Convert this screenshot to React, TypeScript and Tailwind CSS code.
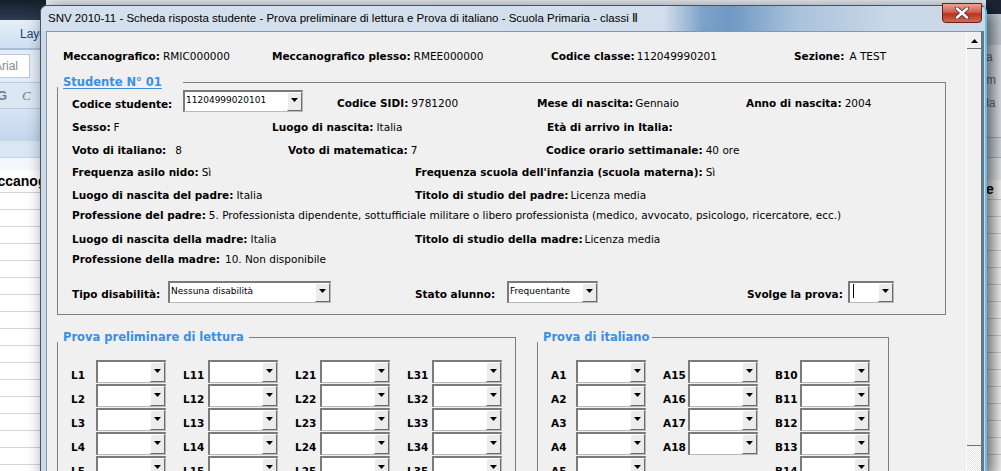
import React from 'react';
import clsx from 'clsx';

const font = "font-['DejaVu_Sans',sans-serif]";

const Arrow = () => (
  <svg width="7" height="4" viewBox="0 0 7 4">
    <path d="M0 0h7L3.5 4z" fill="#000" />
  </svg>
);

// classic win combobox
const Combo: React.FC<{ className?: string; text?: string; cursor?: boolean }> = ({ className, text, cursor }) => (
  <div
    className={clsx(
      'flex bg-white border-t-2 border-l-2 border-t-[#7a7a7a] border-l-[#7a7a7a] border-r border-b border-r-[#b9b9b9] border-b-[#b9b9b9]',
      className
    )}
  >
    <div className={`flex-1 flex items-start pl-[1px] pt-[2px] text-[9px] leading-[12px] text-black ${font} whitespace-nowrap overflow-hidden`}>
      {cursor && <div className="w-px h-[14px] -mt-[1px] bg-black ml-[2px]" />}
      {text}
    </div>
    <div className="w-[15px] flex items-center justify-center pb-[3px] bg-[#ececec] border-t border-l border-t-white border-l-white border-r border-b border-r-[#6b6b6b] border-b-[#6b6b6b]">
      <Arrow />
    </div>
  </div>
);

const GroupHeader: React.FC<{ title: string; underline?: boolean; gap: string }> = ({ title, underline, gap }) => (
  <div className="flex h-[16px]">
    <div className="w-[6px] self-end h-[3px] border-l border-[#7e7e7e]" />
    <span
      className={clsx(
        `text-[11.5px] leading-[16px] font-bold text-[#3b8ee6] whitespace-nowrap ${font}`,
        underline && 'underline underline-offset-2'
      )}
    >
      {title}
    </span>
    <div className={clsx('flex-1 self-end h-[8px] border-t border-r border-[#7e7e7e]', gap)} />
  </div>
);

const KV: React.FC<{ k: string; v?: string; gap?: string; className?: string }> = ({ k, v, gap = 'ml-[3px]', className }) => (
  <div className={clsx('flex items-center whitespace-nowrap', className)}>
    <span className="font-bold">{k}</span>
    {v && <span className={gap}>{v}</span>}
  </div>
);

const Cell: React.FC<{ label?: string }> = ({ label }) =>
  label ? (
    <div className="flex h-[23px]">
      <span className="w-[25px] pt-[8px] leading-[14px] font-bold">{label}</span>
      <Combo className="w-[70px] h-[23px]" />
    </div>
  ) : (
    <div className="h-[23px] w-[95px]" />
  );

const Column: React.FC<{ items: (string | null)[] }> = ({ items }) => (
  <div className="flex flex-col gap-[1px]">
    {items.map((it, i) => (
      <Cell key={i} label={it ?? undefined} />
    ))}
  </div>
);

const range = (p: string, a: number, b: number) => {
  const out: string[] = [];
  for (let i = a; i <= b; i++) out.push(p + i);
  return out;
};

export default function App() {
  const gridRows = Array.from({ length: 17 });

  return (
    <div className="relative w-[1001px] h-[471px] overflow-hidden bg-white flex">
      {/* excel window behind - left strip */}
      <div className="w-[46px] shrink-0 h-full overflow-hidden flex flex-col font-['Liberation_Sans',sans-serif]">
        <div className="h-[20px] shrink-0 bg-[#222d3e] [background-image:linear-gradient(180deg,#161e2a,#2d3c51)]" />
        <div className="h-[28px] shrink-0 bg-[#dae6f4] [background-image:linear-gradient(180deg,#e4eef9,#d0dff1)] flex items-center pl-[20px] text-[12px] text-[#1e3f73] whitespace-nowrap">
          Layout di pagina
        </div>
        <div className="h-[2px] shrink-0 bg-[#a9bfd6]" />
        <div className="h-[32px] shrink-0 bg-[#e3ecf7] flex items-center">
          <div className="h-[24px] w-[38px] bg-white border border-[#b8c9dd] flex items-center -ml-[8px] pl-[1px] text-[12px] text-[#8a8a8a]">
            Arial
          </div>
        </div>
        <div className="h-[26px] shrink-0 bg-[#dce7f4] border-t border-[#b9cbe0] flex items-center text-[13px] text-[#6f7b8b]">
          <span className="font-bold -ml-[3px] w-[25px]">G</span>
          <span className="italic font-['Liberation_Serif',serif]">C</span>
        </div>
        <div className="h-[32px] shrink-0 bg-[#cbdbee] [background-image:linear-gradient(180deg,#d7e5f5,#c3d6ec)] border-t border-[#b9cbe0]" />
        <div className="h-[17px] shrink-0 bg-[#dbe6f3] border-t border-[#c4d4e6]" />
        <div className="h-[13px] shrink-0 bg-[#f4f7fb] border-t border-[#c4d4e6]" />
        <div className="h-[23px] shrink-0 bg-white flex items-center text-[14px] font-bold text-black whitespace-nowrap border-b border-[#d4d4d4]">
          <span className="-ml-[22px]">Meccanografico</span>
        </div>
        {gridRows.map((_, i) => (
          <div key={i} className="h-[17px] border-b border-[#d4d4d4] shrink-0" />
        ))}
      </div>

      <div className="flex-1 bg-[#e9eef4]" />

      {/* excel window behind - right strip */}
      <div className="w-[15px] shrink-0 h-full overflow-hidden flex flex-col font-['Liberation_Sans',sans-serif] text-[12px] text-[#6d6d6d]">
        <div className="h-[14px] shrink-0 bg-[#1d2636]" />
        <div className="h-[31px] shrink-0 bg-[#c9d3de]" />
        <div className="h-[24px] shrink-0 bg-[#e6eaef] flex items-center">a</div>
        <div className="h-[22px] shrink-0 bg-[#e6eaef] flex items-center">m</div>
        <div className="h-[24px] shrink-0 bg-[#e6eaef] flex items-center">la</div>
        <div className="h-[23px] shrink-0 bg-[#e6eaef] border-b border-[#b5bcc6]" />
        <div className="h-[20px] shrink-0 bg-[#dfe5ec] border-b border-[#b5bcc6]" />
        <div className="h-[22px] shrink-0 bg-[#eef1f5]" />
        <div className="h-[20px] shrink-0 bg-white flex items-center text-[14px] font-bold text-black border-b border-[#d4d4d4]">e</div>
        {gridRows.map((_, i) => (
          <div key={i} className="h-[17px] bg-white border-b border-[#d4d4d4] shrink-0" />
        ))}
      </div>

      {/* dialog window */}
      <div className="absolute left-[40px] top-[5px] w-[947px] h-[472px] flex flex-col rounded-t-[7px] border border-[#44556b] border-r-2 border-r-[#5cc3e8] bg-[#ccd9e8] shadow-[6px_4px_18px_rgba(0,0,0,0.65)]">
        {/* title bar */}
        <div className="h-[25px] shrink-0 rounded-t-[6px] bg-[#d4e0ed] [background-image:linear-gradient(90deg,#d4e0ed_0%,#d2deeb_66%,#7ea3ca_70%,#6f98c4_73%,#a9c2dc_80%,#cad8e8_90%,#cad8e8_100%)] pl-[7px] pt-[5px]">
          <div className="text-[11.5px] leading-[14px] text-black whitespace-nowrap font-['Liberation_Sans',sans-serif]">
            SNV 2010-11 - Scheda risposta studente - Prova preliminare di lettura e Prova di italiano - Scuola Primaria - classi Ⅱ
          </div>
        </div>
        <div className="absolute right-[3px] -top-[3px] w-[40px] h-[20px] rounded-b-[4px] border border-[#6b1f17] bg-[#c24431] [background-image:linear-gradient(180deg,#e8a295_0%,#d0604f_45%,#b8321f_55%,#d46a52_100%)] flex items-center justify-center">
          <svg width="14" height="12" viewBox="0 0 14 12">
            <path d="M2 1.5L12 10.5M12 1.5L2 10.5" stroke="#4a3a3a" strokeWidth="4.2" strokeLinecap="round" />
            <path d="M2 1.5L12 10.5M12 1.5L2 10.5" stroke="#fff" strokeWidth="2.4" strokeLinecap="round" />
          </svg>
        </div>

        {/* client row */}
        <div className="flex-1 flex">
          <div className="w-[5px]" />
          <div className="w-[935px] flex border-t border-l border-[#8597ad] bg-[#f0f0f0]">
            {/* form content */}
            <div className={`w-[919px] flex flex-col text-[10.5px] text-black ${font}`}>
              {/* top info row */}
              <div className="h-[20px] mt-[15px] pl-[16px] flex items-center">
                <KV k="Meccanografico:" v="RMIC000000" className="w-[209px]" />
                <KV k="Meccanografico plesso:" v="RMEE000000" className="w-[279px]" />
                <KV k="Codice classe:" v="112049990201" gap="ml-[2px]" className="w-[243px]" />
                <KV k="Sezione:" v="A TEST" gap="ml-[5px]" />
              </div>

              {/* studente group */}
              <div className="ml-[10px] w-[889px] mt-[7px]">
                <GroupHeader title="Studente N° 01" underline gap="ml-[21px]" />
                <div className="border-l border-r border-b border-[#7e7e7e] pl-[14px] pb-[10px] flex flex-col">
                  <div className="h-[25px] flex items-start">
                    <div className="w-[265px] flex items-start">
                      <span className="w-[111px] pt-[7px] leading-[14px] font-bold">Codice studente:</span>
                      <Combo className="w-[120px] h-[22px]" text="11204999020101" />
                    </div>
                    <KV k="Codice SIDI:" v="9781200" className="w-[200px] h-[14px] mt-[7px]" />
                    <KV k="Mese di nascita:" v="Gennaio" gap="ml-[2px]" className="w-[209px] h-[14px] mt-[7px]" />
                    <KV k="Anno di nascita:" v="2004" className="h-[14px] mt-[7px]" />
                  </div>
                  <div className="h-[20px] mt-[3px] flex">
                    <KV k="Sesso:" v="F" className="w-[200px]" />
                    <KV k="Luogo di nascita:" v="Italia" className="w-[275px]" />
                    <KV k="Età di arrivo in Italia:" />
                  </div>
                  <div className="h-[20px] mt-[3px] flex">
                    <KV k="Voto di italiano:" v="8" gap="ml-[9px]" className="w-[216px]" />
                    <KV k="Voto di matematica:" v="7" className="w-[258px]" />
                    <KV k="Codice orario settimanale:" v="40 ore" />
                  </div>
                  <div className="h-[20px] mt-[2px] flex">
                    <KV k="Frequenza asilo nido:" v="Sì" className="w-[343px]" />
                    <KV k="Frequenza scuola dell'infanzia (scuola materna):" v="Sì" />
                  </div>
                  <div className="h-[20px] mt-[3px] flex">
                    <KV k="Luogo di nascita del padre:" v="Italia" className="w-[343px]" />
                    <KV k="Titolo di studio del padre:" v="Licenza media" gap="ml-[2px]" />
                  </div>
                  <div className="h-[20px] flex">
                    <KV
                      k="Professione del padre:"
                      v="5. Professionista dipendente, sottufficiale militare o libero professionista (medico, avvocato, psicologo, ricercatore, ecc.)"
                    />
                  </div>
                  <div className="h-[20px] mt-[4px] flex">
                    <KV k="Luogo di nascita della madre:" v="Italia" className="w-[343px]" />
                    <KV k="Titolo di studio della madre:" v="Licenza media" gap="ml-[2px]" />
                  </div>
                  <div className="h-[20px] flex">
                    <KV k="Professione della madre:" v="10. Non disponibile" gap="ml-[5px]" />
                  </div>
                  <div className="h-[23px] mt-[11px] flex items-start">
                    <div className="w-[343px] flex items-start">
                      <span className="w-[96px] pt-[6px] leading-[14px] font-bold">Tipo disabilità:</span>
                      <Combo className="w-[163px] h-[22px]" text="Nessuna disabilità" />
                    </div>
                    <div className="w-[332px] flex items-start">
                      <span className="w-[92px] pt-[6px] leading-[14px] font-bold">Stato alunno:</span>
                      <Combo className="w-[91px] h-[22px]" text="Frequentante" />
                    </div>
                    <div className="flex items-start">
                      <span className="w-[101px] pt-[6px] leading-[14px] font-bold">Svolge la prova:</span>
                      <Combo className="w-[46px] h-[22px]" cursor />
                    </div>
                  </div>
                </div>
              </div>

              {/* prove */}
              <div className="flex mt-[14px] ml-[10px] items-start">
                <div className="w-[459px]">
                  <GroupHeader title="Prova preliminare di lettura" gap="ml-[5px]" />
                  <div className="h-[200px] border-l border-r border-[#7e7e7e] pt-[15px] pl-[13px] flex gap-[17px]">
                    <Column items={range('L', 1, 7)} />
                    <Column items={range('L', 11, 17)} />
                    <Column items={range('L', 21, 27)} />
                    <Column items={range('L', 31, 37)} />
                  </div>
                </div>
                <div className="w-[352px] ml-[21px]">
                  <GroupHeader title="Prova di italiano" gap="ml-[3px]" />
                  <div className="h-[200px] border-l border-r border-[#7e7e7e] pt-[15px] pl-[13px] flex gap-[17px]">
                    <Column items={range('A', 1, 7)} />
                    <Column items={[...range('A', 15, 18), null, null, null]} />
                    <Column items={range('B', 10, 16)} />
                  </div>
                </div>
              </div>
            </div>

            {/* vertical scrollbar */}
            <div className="w-[15px] flex flex-col border-l border-white">
              <div className="h-[17px] shrink-0 bg-[#f0f0f0] border-b border-[#6e6e6e] flex items-center justify-center pt-[1px]">
                <svg width="7" height="4" viewBox="0 0 7 4">
                  <path d="M0 4h7L3.5 0z" fill="#000" />
                </svg>
              </div>
              <div className="h-[397px] shrink-0 bg-[#f0f0f0] border-b border-[#6e6e6e]" />
              <div className="flex-1 bg-[#f2f2f2] [background-image:repeating-conic-gradient(#ffffff_0_25%,#e4e4e4_0_50%)] [background-size:2px_2px]" />
            </div>
          </div>
          <div className="w-[3px] bg-[#66778b]" />
        </div>
      </div>
    </div>
  );
}
